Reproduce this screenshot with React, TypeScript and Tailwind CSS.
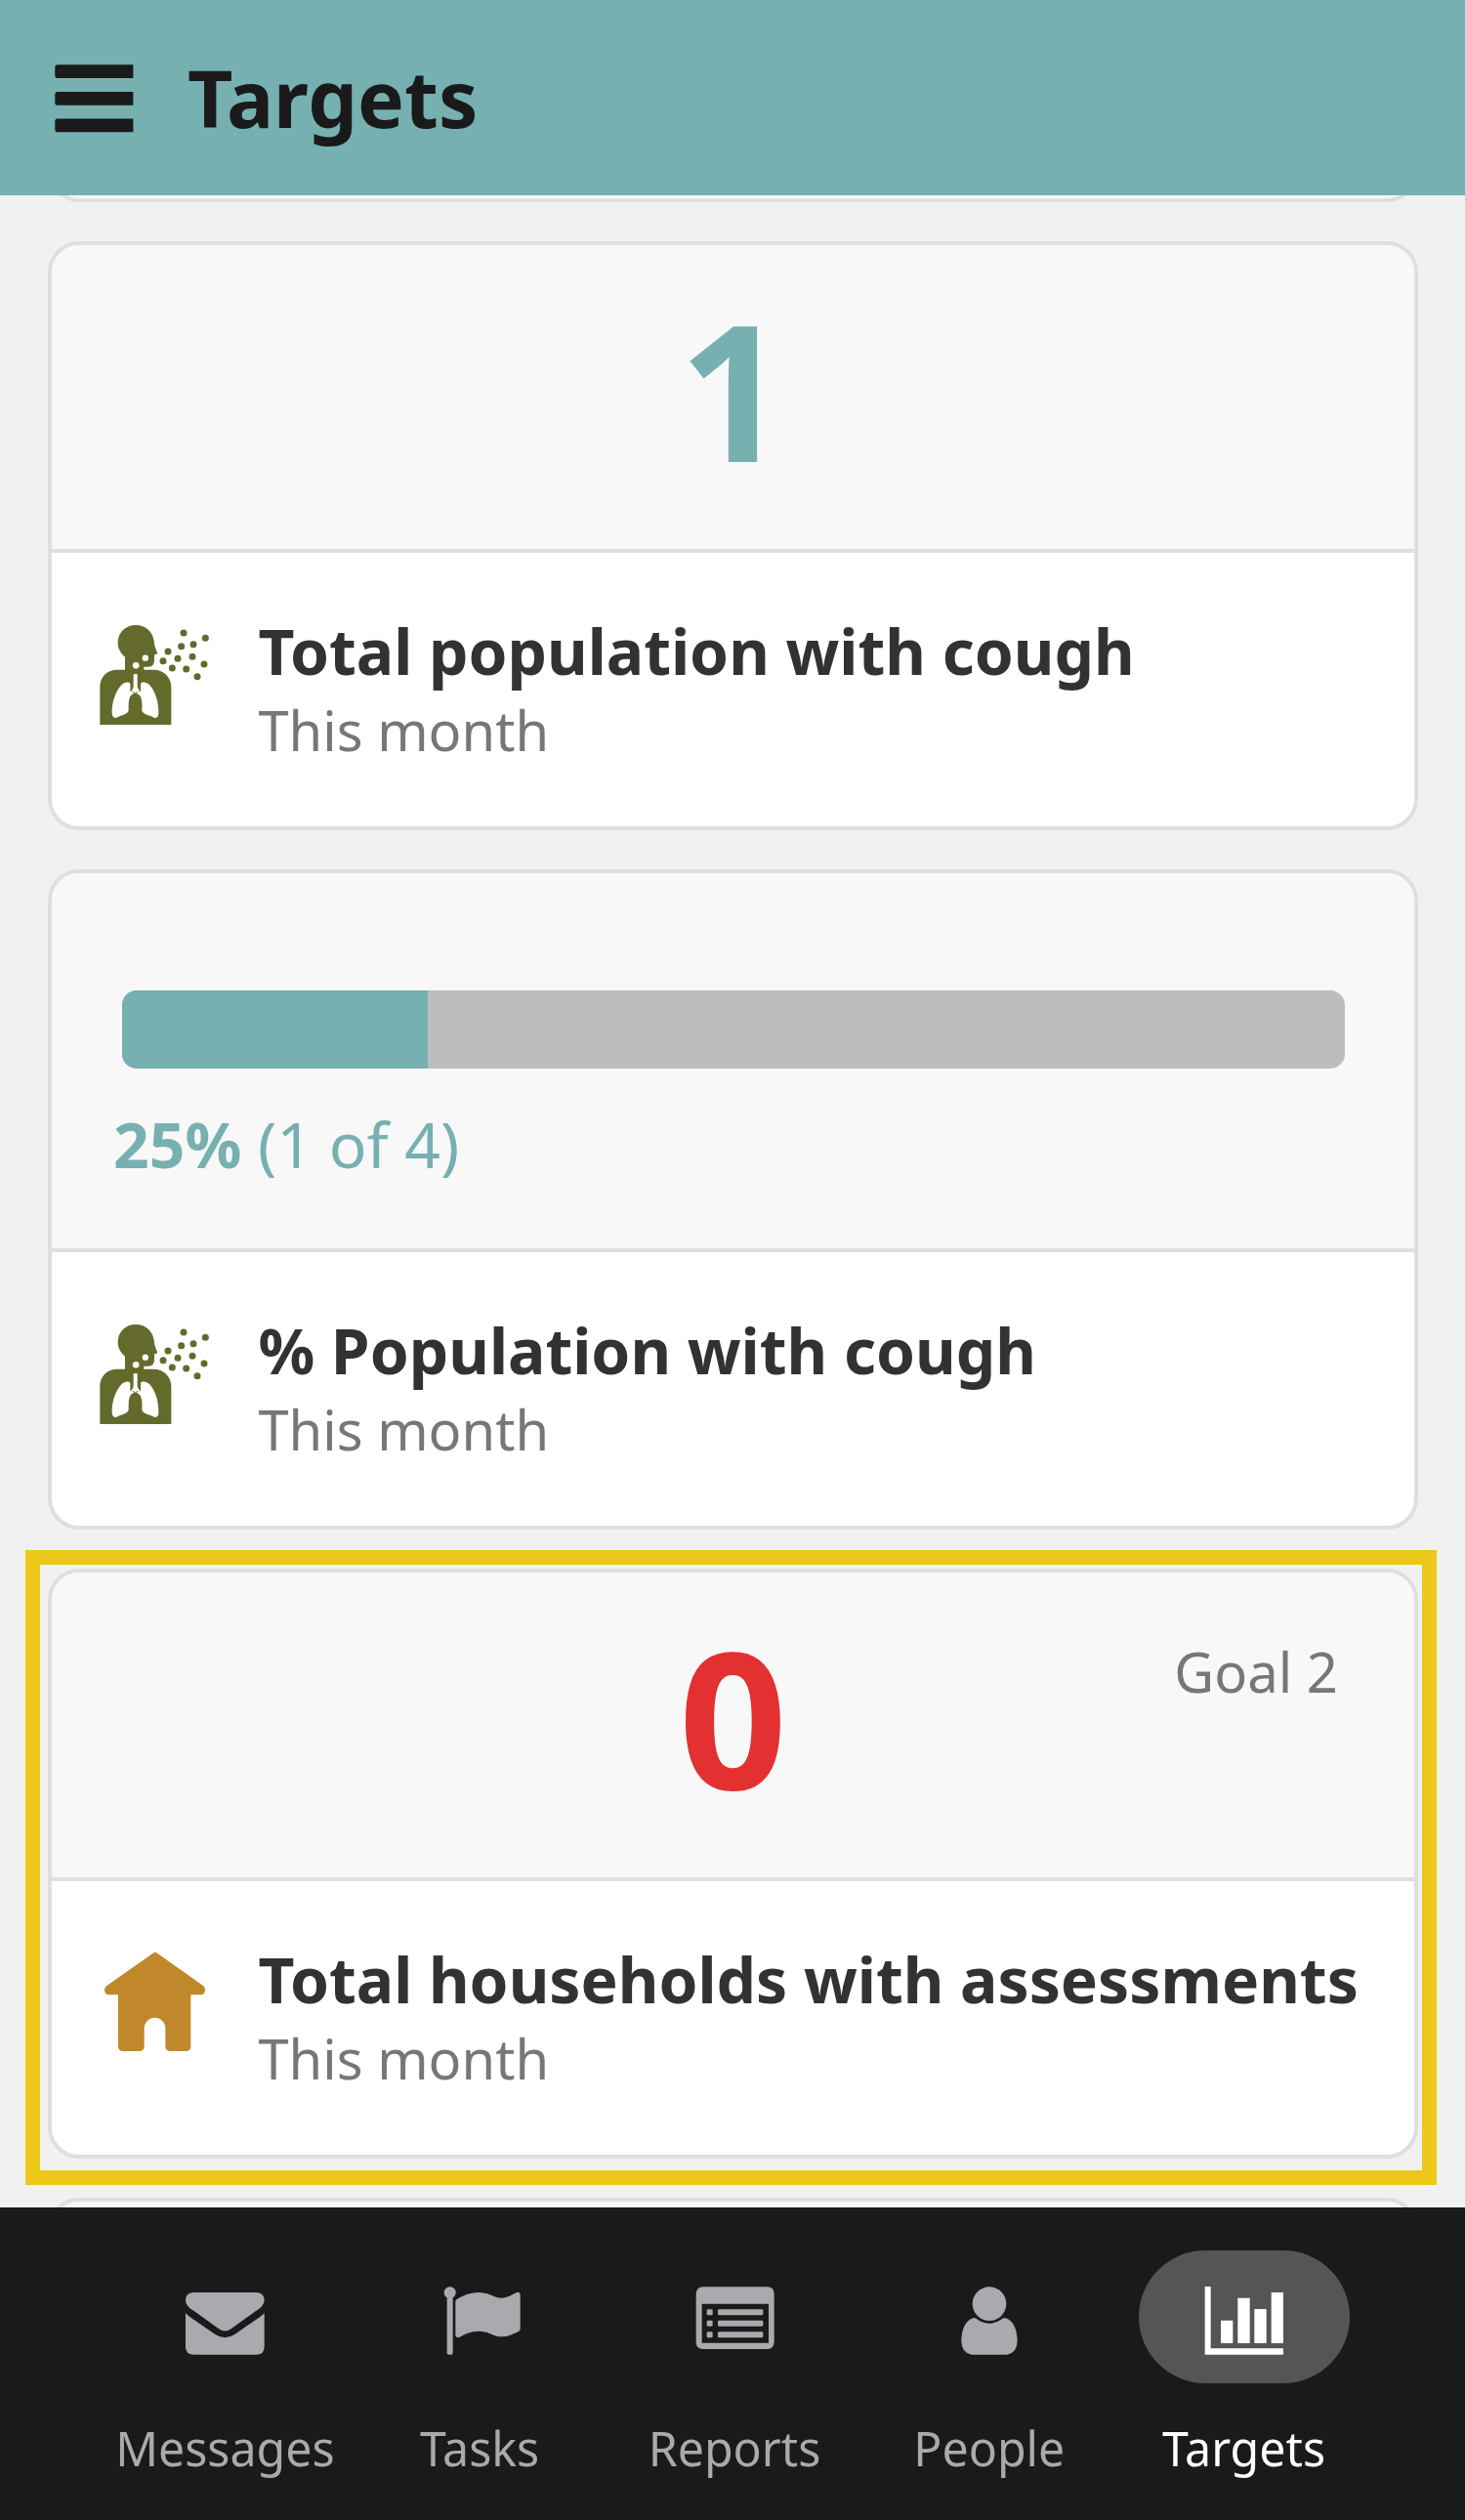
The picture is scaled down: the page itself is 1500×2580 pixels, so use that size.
import type { ReactNode } from "react";

function MenuIcon() {
  return (
    <svg className="h-[70px] w-[81px] shrink-0" viewBox="0 0 81 70" fill="#1a1a1a">
      {[0.3, 27.9, 55.4].map((y) => (
        <path key={y} d={`M3 ${y}H80.4V${y + 13.8}H3Q0.3 ${y + 13.8} 0.3 ${y + 11}V${y + 2.8}Q0.3 ${y} 3 ${y}Z`} />
      ))}
    </svg>
  );
}

const DROPLETS: [number, number][] = [
  [294, 84], [361, 100], [287, 125], [324, 119], [246, 141], [276, 163], [321, 157],
  [231, 170], [259, 192], [302, 195], [357, 180], [336, 218],
];

function CoughIcon() {
  return (
    <svg className="h-[140px] w-[140px] shrink-0" viewBox="0 0 420 420">
      <g fill="#636a2b">
        <path d="M37 366V250C37 218 60 197 90 197H114V158C101 147 92 133 92 114C92 83 116 60 147 60C178 60 200 82 203 109C204 122 208 134 213 144C214 149 210 151 204 150V168C204 181 197 188 186 188H172V197H201C233 197 256 220 256 250V366Z" />
        {DROPLETS.map(([x, y]) => (
          <circle key={`${x}-${y}`} cx={x} cy={y} r="10.5" />
        ))}
      </g>
      <g fill="#fff">
        <circle cx="176.500" cy="161" r="9.500" />
        <circle cx="147.500" cy="184" r="10" />
        <path d="M140 213Q140 210 143 210H149Q152 210 152 213V249C154 258 160 262 162 267C156 266 151 262 146 269C140 262 136 266 130 267C133 261 139 258 140 249Z" />
        <path d="M130 240C125 233 112 235 104 243C84 263 73 299 74 331C75 343 80 347 89 344C99 336 119 336 125 323C125 307 124 285 132 276L143 268L130 264Z" />
        <path d="M162 240C167 233 180 235 189 243C208 263 218 299 217 331C216 343 212 347 203 344C192 336 172 336 166 323C167 307 167 285 159 276L148 268L162 264Z" />
      </g>
    </svg>
  );
}

function HouseIcon() {
  return (
    <svg className="h-[140px] w-[140px] shrink-0" viewBox="30 60 420 420" fill="#c1872b">
      <path d="M230 119Q236.500 114 243 119L384 219Q391 225 390 234Q388 247 376 247H346V404Q346 420 330 420H284Q268 420 268 404V350A32.500 33 0 0 0 203 350V404Q203 420 187 420H139Q123 420 123 404V247H96Q83 247 81 234Q80 225 88 219Z" />
    </svg>
  );
}

function Card({ head, icon, title }: { head: ReactNode; icon: ReactNode; title: string }) {
  return (
    <section className="overflow-hidden rounded-[32px] border-4 border-[#dfdfdf] bg-white">
      {head}
      <div className="flex h-[284px] items-start border-t-4 border-[#dfdfdf] pl-[37px]">
        <div className="mt-[54px]">{icon}</div>
        <div className="ml-[34.400px] pt-[59.500px] whitespace-nowrap">
          <h2 className="text-[64.100px] leading-[80px] font-bold text-[#323232]">{title}</h2>
          <p className="text-[56.100px] leading-[82px] text-[#777777]">This month</p>
        </div>
      </div>
    </section>
  );
}

function NavItem({ label, viewBox, active, children }: { label: string; viewBox: string; active?: boolean; children: ReactNode }) {
  return (
    <a className={`flex flex-col items-center ${active ? "text-white" : "text-[#a9aaae]"}`}>
      <span className={`h-[136px] w-[216px] rounded-full ${active ? "bg-[#555555]" : ""}`}>
        <svg className="h-full w-full" viewBox={viewBox} fill="currentColor">{children}</svg>
      </span>
      <span className="mt-[33.500px] text-[48.300px] leading-[64px]">{label}</span>
    </a>
  );
}

export default function App() {
  return (
    <div className="flex h-[2580px] w-[1500px] flex-col overflow-hidden bg-[#f1f1f1] font-['Noto_Sans',sans-serif]">
      <header className="flex h-[200px] shrink-0 items-center bg-[#77b0b0] pt-px pl-[56px]">
        <MenuIcon />
        <h1 className="ml-[55px] pb-[2px] text-[80.400px] leading-[110px] font-bold text-[#1a1a1a]">Targets</h1>
      </header>

      <main className="flex h-[2060px] shrink-0 flex-col overflow-hidden pr-[48px] pl-[49px]">
        <div className="-mt-[73px] h-[80px] shrink-0 rounded-[32px] border-4 border-[#dfdfdf] bg-white" />

        <div className="mt-10 shrink-0">
          <Card
            head={
              <div className="h-[311px] bg-[#f8f8f8] pt-[47px] text-center text-[194px] leading-[200px] font-bold text-[#77b0b0]">1</div>
            }
            icon={<CoughIcon />}
            title="Total population with cough"
          />
        </div>

        <div className="mt-10 shrink-0">
          <Card
            head={
              <div className="h-[384px] bg-[#f8f8f8] pt-[120px] text-[#77b0b0]">
                <div className="mr-[71px] ml-[72px] h-[80px] overflow-hidden rounded-[15px] bg-[#bcbdbf]">
                  <div className="h-full w-1/4 bg-[#77b0b0]" />
                </div>
                <p className="mt-[37px] ml-[63px] text-[64.200px] leading-[80px]">
                  <b>25%</b> (1 of 4)
                </p>
              </div>
            }
            icon={<CoughIcon />}
            title="% Population with cough"
          />
        </div>

        <div className="relative mt-10 shrink-0">
          <Card
            head={
              <div className="relative h-[312px] bg-[#f8f8f8] pt-[47px] text-center text-[194px] leading-[200px] font-bold text-[#e33030]">
                0
                <span className="absolute top-[61px] right-[78px] text-[56.200px] leading-[80px] font-normal text-[#777777]">Goal 2</span>
              </div>
            }
            icon={<HouseIcon />}
            title="Total households with assessments"
          />
          <div className="pointer-events-none absolute -top-[19px] -right-[19px] -bottom-[27px] -left-[23px] border-[15px] border-[#ebc81a]" />
        </div>

        <div className="mt-10 h-[80px] shrink-0 rounded-[32px] border-4 border-[#dfdfdf] bg-[#f8f8f8]" />
      </main>

      <nav className="grid h-[320px] shrink-0 grid-cols-5 bg-[#1a1a1a] pt-[44px] pr-[96px] pl-[100px]">
        <NavItem label="Messages" viewBox="67 12 648 408">
          <path d="M295 141H489Q513 142 513 167C510 180 502 188 490 196L413 251Q392 268 371 251L294 196C282 188 273 180 271 167Q271 142 295 141Z" />
          <path d="M271 204Q276 210 284 216L361 269Q392 290 423 269L500 216Q508 210 513 204V309Q512 331 491 332H293Q272 331 271 309Z" />
        </NavItem>
        <NavItem label="Tasks" viewBox="849 12 648 408">
          <path d="M1073 157A18 18 0 1 1 1091 157V327Q1091 332 1086 332H1078Q1073 332 1073 327Z" />
          <path d="M1099 170Q1099 165 1103 162C1125 148 1147 141 1169 141C1205 141 1216 158 1240 158C1258 158 1274 148 1287 141Q1297 138 1298 149V253Q1298 258 1293 261C1276 270 1260 277 1242 277C1215 277 1203 260 1170 260C1146 260 1127 270 1110 279Q1100 281 1099 273Z" />
        </NavItem>
        <NavItem label="Reports" viewBox="131 12 648 408">
          <path fillRule="evenodd" d="M358 124H556Q577 125 577 145V293Q576 314 556 315H358Q337 314 337 293V145Q338 125 358 124ZM355 176V296H560V176Z" />
          {[193, 227, 262].map((y) => (
            <g key={y}>
              <rect x="370" y={y} width="18" height="18" rx="4" />
              <rect x="404" y={y} width="139" height="18" rx="4" />
            </g>
          ))}
        </NavItem>
        <NavItem label="People" viewBox="912 12 648 408">
          <circle cx="1236" cy="176" r="52" />
          <path d="M1188 219Q1194 219 1201 225Q1236 248 1271 225Q1278 219 1284 219C1311 226 1322 258 1322 292Q1321 327 1291 332H1181Q1151 327 1150 292C1150 258 1161 226 1188 219Z" />
        </NavItem>
        <NavItem label="Targets" viewBox="194 372 648 408" active>
          <path d="M397 483H415V673H638V692H397ZM446 587H483V657H446ZM498 518H535V657H498ZM549 552H586V657H549ZM601 501H638V657H601Z" />
        </NavItem>
      </nav>
    </div>
  );
}
